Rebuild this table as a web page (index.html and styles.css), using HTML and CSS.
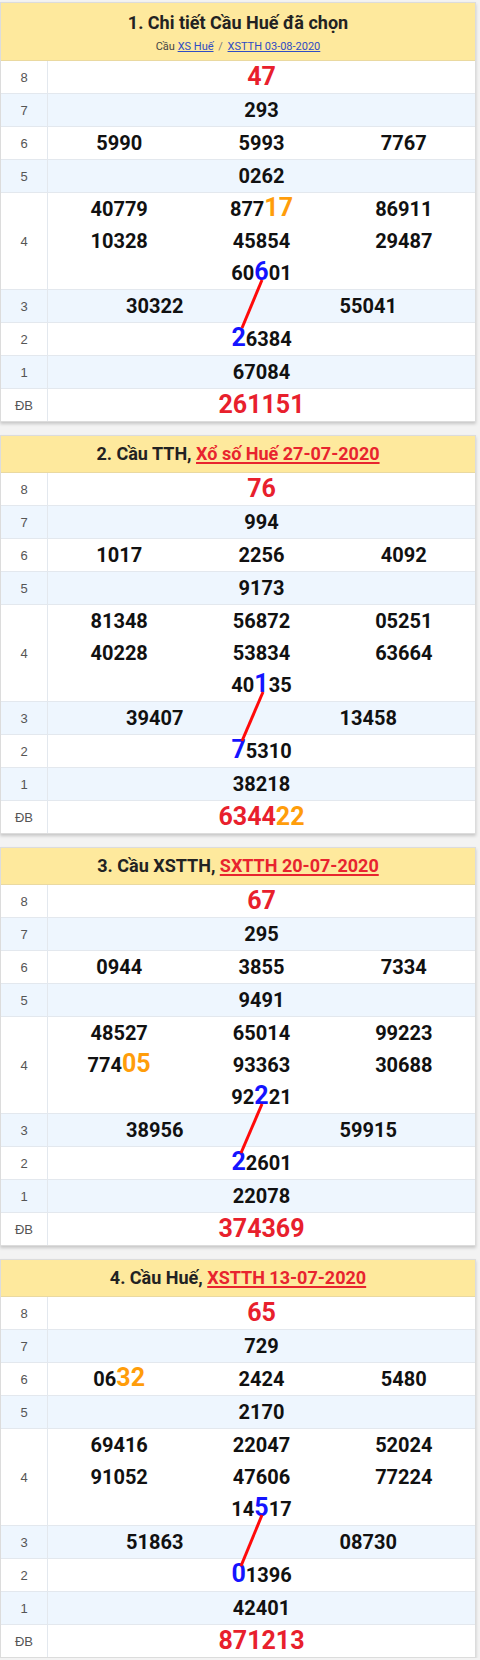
FILE: index.html
```html
<!DOCTYPE html>
<html lang="vi">
<head>
<meta charset="utf-8">
<title>Cầu Huế</title>
<link rel="stylesheet" href="styles.css">
</head>
<body>
<div class="page">

  <section class="card">
    <header class="card-head tall">
      <h2 class="title">1. Chi tiết Cầu Huế đã chọn</h2>
      <div class="sub">Cầu <a href="#">XS Huế</a> <span class="sep">/</span> <a href="#">XSTTH 03-08-2020</a></div>
    </header>
    <div class="body">
      <div class="row"><div class="lbl">8</div><div class="val one"><span class="big red">47</span></div></div>
      <div class="row alt"><div class="lbl">7</div><div class="val one"><span>293</span></div></div>
      <div class="row"><div class="lbl">6</div><div class="val three"><span>5990</span><span>5993</span><span>7767</span></div></div>
      <div class="row alt"><div class="lbl">5</div><div class="val one"><span>0262</span></div></div>
      <div class="row"><div class="lbl">4</div><div class="val three"><span>40779</span><span>877<b class="hl org">17</b></span><span>86911</span><span>10328</span><span>45854</span><span>29487</span><span class="mid">60<b class="hl blu">6</b>01</span></div></div>
      <div class="row alt"><div class="lbl">3</div><div class="val two"><span>30322</span><span>55041</span></div></div>
      <div class="row"><div class="lbl">2</div><div class="val one"><span><b class="hl blu">2</b>6384</span></div></div>
      <div class="row alt"><div class="lbl">1</div><div class="val one"><span>67084</span></div></div>
      <div class="row"><div class="lbl">ĐB</div><div class="val one"><span class="big red">261151</span></div></div>
      <svg class="link" viewBox="0 0 474 360" width="474" height="360"><line x1="261" y1="219" x2="241" y2="267"/></svg>
    </div>
  </section>

  <section class="card">
    <header class="card-head">
      <h2 class="title">2. Cầu TTH, <a class="rlink" href="#">Xổ số Huế 27-07-2020</a></h2>
    </header>
    <div class="body">
      <div class="row"><div class="lbl">8</div><div class="val one"><span class="big red">76</span></div></div>
      <div class="row alt"><div class="lbl">7</div><div class="val one"><span>994</span></div></div>
      <div class="row"><div class="lbl">6</div><div class="val three"><span>1017</span><span>2256</span><span>4092</span></div></div>
      <div class="row alt"><div class="lbl">5</div><div class="val one"><span>9173</span></div></div>
      <div class="row"><div class="lbl">4</div><div class="val three"><span>81348</span><span>56872</span><span>05251</span><span>40228</span><span>53834</span><span>63664</span><span class="mid">40<b class="hl blu">1</b>35</span></div></div>
      <div class="row alt"><div class="lbl">3</div><div class="val two"><span>39407</span><span>13458</span></div></div>
      <div class="row"><div class="lbl">2</div><div class="val one"><span><b class="hl blu">7</b>5310</span></div></div>
      <div class="row alt"><div class="lbl">1</div><div class="val one"><span>38218</span></div></div>
      <div class="row"><div class="lbl">ĐB</div><div class="val one"><span class="big red">6344<b class="org">22</b></span></div></div>
      <svg class="link" viewBox="0 0 474 360" width="474" height="360"><line x1="262" y1="219" x2="241" y2="268"/></svg>
    </div>
  </section>

  <section class="card">
    <header class="card-head">
      <h2 class="title">3. Cầu XSTTH, <a class="rlink" href="#">SXTTH 20-07-2020</a></h2>
    </header>
    <div class="body">
      <div class="row"><div class="lbl">8</div><div class="val one"><span class="big red">67</span></div></div>
      <div class="row alt"><div class="lbl">7</div><div class="val one"><span>295</span></div></div>
      <div class="row"><div class="lbl">6</div><div class="val three"><span>0944</span><span>3855</span><span>7334</span></div></div>
      <div class="row alt"><div class="lbl">5</div><div class="val one"><span>9491</span></div></div>
      <div class="row"><div class="lbl">4</div><div class="val three"><span>48527</span><span>65014</span><span>99223</span><span>774<b class="hl org">05</b></span><span>93363</span><span>30688</span><span class="mid">92<b class="hl blu">2</b>21</span></div></div>
      <div class="row alt"><div class="lbl">3</div><div class="val two"><span>38956</span><span>59915</span></div></div>
      <div class="row"><div class="lbl">2</div><div class="val one"><span><b class="hl blu">2</b>2601</span></div></div>
      <div class="row alt"><div class="lbl">1</div><div class="val one"><span>22078</span></div></div>
      <div class="row"><div class="lbl">ĐB</div><div class="val one"><span class="big red">374369</span></div></div>
      <svg class="link" viewBox="0 0 474 360" width="474" height="360"><line x1="261" y1="219" x2="240" y2="268"/></svg>
    </div>
  </section>

  <section class="card">
    <header class="card-head">
      <h2 class="title">4. Cầu Huế, <a class="rlink" href="#">XSTTH 13-07-2020</a></h2>
    </header>
    <div class="body">
      <div class="row"><div class="lbl">8</div><div class="val one"><span class="big red">65</span></div></div>
      <div class="row alt"><div class="lbl">7</div><div class="val one"><span>729</span></div></div>
      <div class="row"><div class="lbl">6</div><div class="val three"><span>06<b class="hl org">32</b></span><span>2424</span><span>5480</span></div></div>
      <div class="row alt"><div class="lbl">5</div><div class="val one"><span>2170</span></div></div>
      <div class="row"><div class="lbl">4</div><div class="val three"><span>69416</span><span>22047</span><span>52024</span><span>91052</span><span>47606</span><span>77224</span><span class="mid">14<b class="hl blu">5</b>17</span></div></div>
      <div class="row alt"><div class="lbl">3</div><div class="val two"><span>51863</span><span>08730</span></div></div>
      <div class="row"><div class="lbl">2</div><div class="val one"><span><b class="hl blu">0</b>1396</span></div></div>
      <div class="row alt"><div class="lbl">1</div><div class="val one"><span>42401</span></div></div>
      <div class="row"><div class="lbl">ĐB</div><div class="val one"><span class="big red">871213</span></div></div>
      <svg class="link" viewBox="0 0 474 360" width="474" height="360"><line x1="261" y1="218" x2="240" y2="269"/></svg>
    </div>
  </section>

</div>
</body>
</html>
```

FILE: styles.css
```css
* { box-sizing: border-box; }

html, body {
  margin: 0;
  padding: 0;
  background: #f3f3f3;
}

body {
  font-family: Roboto, "Noto Sans", Arial, sans-serif;
  color: #111;
}

.page {
  padding: 2px 4px 0 0;
  display: flex;
  flex-direction: column;
  gap: 13px;
}

.card {
  width: 476px;
  background: #fff;
  border: 1px solid #dcdcdc;
  box-shadow: 0 2px 3px rgba(0, 0, 0, 0.18);
}

.card-head {
  background: #fee99d;
  height: 37px;
  display: flex;
  flex-direction: column;
  align-items: center;
  justify-content: center;
  border-bottom: 1px solid #ead9a0;
}

.card-head.tall {
  height: 58px;
  justify-content: flex-start;
  padding-top: 9px;
}

.title {
  margin: 0;
  font-size: 18px;
  font-weight: 700;
  color: #222;
  line-height: 22px;
}

.sub {
  margin-top: 6px;
  font-size: 11px;
  color: #444;
  line-height: 14px;
}

.sub a {
  color: #2f4cc4;
  text-decoration: underline;
}

.sub .sep {
  color: #777;
  margin: 0 2px;
}

.rlink {
  color: #e8242e;
  text-decoration: underline;
  text-decoration-thickness: 2px;
  text-underline-offset: 2px;
}

.body {
  position: relative;
}

.row {
  display: flex;
  border-bottom: 1px solid #e3e8ee;
  background: #fff;
}

.row:last-of-type {
  border-bottom: none;
}

.row.alt {
  background: #eef6fe;
}

.lbl {
  width: 47px;
  flex: none;
  border-right: 1px solid #e3e8ee;
  display: flex;
  align-items: center;
  justify-content: center;
  font-family: "Liberation Sans", Arial, sans-serif;
  font-size: 13px;
  color: #555;
}

.val {
  flex: 1;
  display: grid;
  font-size: 20px;
  font-weight: 700;
  text-align: center;
  color: #111;
}

.val > span {
  display: block;
  height: 32px;
  line-height: 32px;
  white-space: nowrap;
}

.val.one { grid-template-columns: 1fr; }
.val.two { grid-template-columns: 1fr 1fr; }
.val.three { grid-template-columns: 1fr 1fr 1fr; }

.val .mid { grid-column: 2; }

.val > .big {
  font-size: 25px;
}

.red { color: #e8202c; }
.org { color: #ff9d0a; }
.blu { color: #1414ff; }

.hl {
  font-size: 25px;
  font-weight: 700;
  line-height: 0;
}

b.org, b.blu { font-weight: 700; }

.link {
  position: absolute;
  top: 0;
  left: 0;
  pointer-events: none;
  overflow: visible;
}

.link line {
  stroke: #ff0a0a;
  stroke-width: 3;
  stroke-linecap: butt;
}
```
